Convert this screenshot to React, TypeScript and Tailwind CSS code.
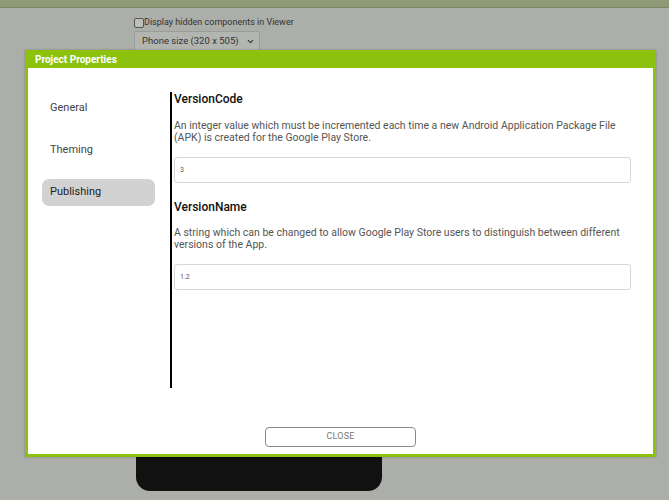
import { ChevronDown } from "lucide-react";

export default function App() {
    return (
        <div
            className="relative w-[669px] h-[500px] overflow-hidden bg-[#acaea9]"
            style={{ fontFamily: "Roboto, 'Liberation Sans', sans-serif" }}
        >
            {/* Top bar */}
            <div className="h-[8px] bg-[#8e9a76] border-b border-[#7d8768]" />

            {/* Designer behind the dialog */}
            <div className="ml-[134px] pt-[9px] flex flex-col">
                <label className="flex items-center h-[11px] text-[9px] leading-[11px] text-[#333] whitespace-nowrap">
                    <span className="w-[10px] h-[10px] border border-[#555] rounded-[2px] bg-[#bdbfba]" />
                    <span>Display hidden components in Viewer</span>
                </label>
                <div className="mt-[3px] w-[126px] h-[20px] border border-[#9a9c97] rounded-[2px] bg-[#b3b5b0] flex items-center justify-between pl-[7px] pr-[4px] text-[9.5px] text-[#333] whitespace-nowrap">
                    <span>Phone size (320 x 505)</span>
                    <ChevronDown size={9} strokeWidth={3} className="text-[#333] shrink-0" />
                </div>
                <div className="ml-[2px] mt-[6px] w-[246px] h-[434px] bg-[#111] rounded-b-[14px]" />
            </div>

            {/* Project Properties dialog */}
            <div className="absolute left-[25px] top-[50px] w-[631px] h-[407px] bg-[#8cc20e] px-[3px] pb-[3px] flex flex-col shadow-[0_0_2px_rgba(0,0,0,0.3)]">
                <div className="h-[18px] flex items-center px-[7px] text-[10px] font-bold text-white">
                    Project Properties
                </div>
                <div className="flex-1 bg-white flex flex-col">
                    <div className="flex flex-1 pl-[14px] pr-[22px]">
                        {/* Side nav */}
                        <div className="w-[113px] pt-[27px] flex flex-col gap-[15px] text-[11px] text-[#444]">
                            <div className="h-[27px] flex items-center pl-[8px]">General</div>
                            <div className="h-[27px] flex items-center pl-[8px]">Theming</div>
                            <div className="h-[27px] flex items-center pl-[8px] bg-[#d2d2d2] rounded-[7px] text-[#222]">
                                Publishing
                            </div>
                        </div>

                        {/* Properties */}
                        <div className="ml-[15px] mt-[24px] h-[296px] flex-1 border-l-2 border-black pl-[2px]">
                            <div className="text-[12px] leading-[14px] font-medium text-[#111]">VersionCode</div>
                            <p className="mt-[14px] text-[10.5px] leading-[12px] text-[#555]">
                                An integer value which must be incremented each time a new Android Application Package File (APK) is created for the Google Play Store.
                            </p>
                            <div className="mt-[13px] h-[26px] border border-[#d8d8d8] rounded-[3px] flex items-center pl-[5px] text-[7px] text-[#555]">
                                3
                            </div>

                            <div className="mt-[17px] text-[12px] leading-[14px] font-medium text-[#111]">VersionName</div>
                            <p className="mt-[13px] text-[10.5px] leading-[12px] text-[#555]">
                                A string which can be changed to allow Google Play Store users to distinguish between different versions of the App.
                            </p>
                            <div className="mt-[13px] h-[26px] border border-[#d8d8d8] rounded-[3px] flex items-center pl-[5px] text-[7px] text-[#555]">
                                1.2
                            </div>
                        </div>
                    </div>

                    {/* Footer */}
                    <div className="flex justify-center pb-[7px]">
                        <button className="w-[151px] h-[20px] border border-[#8a8a8a] rounded-[4px] bg-white text-[9px] text-[#777] tracking-wide">
                            CLOSE
                        </button>
                    </div>
                </div>
            </div>
        </div>
    );
}
